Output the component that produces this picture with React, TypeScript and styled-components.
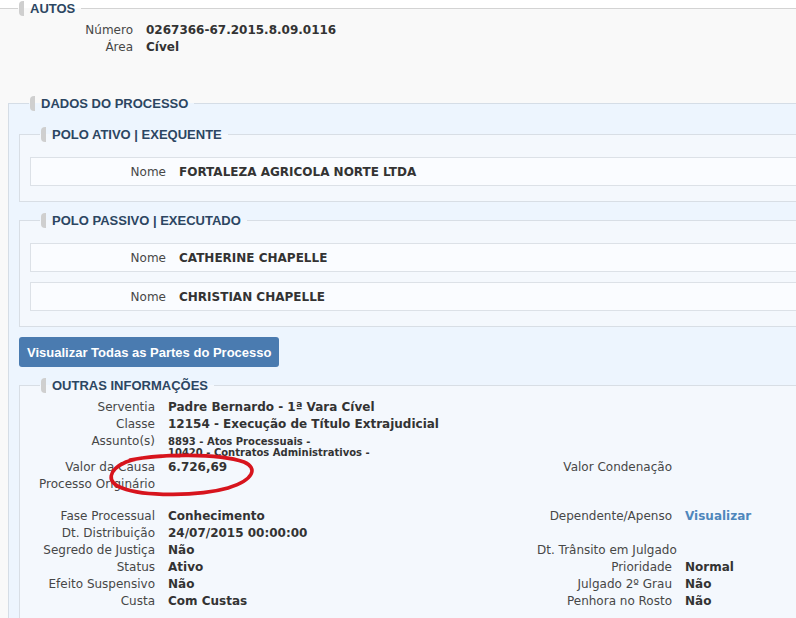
import React from 'react';
import styled, { createGlobalStyle } from 'styled-components';

const Global = createGlobalStyle`
  html, body { margin: 0; padding: 0; background: #ffffff; overflow: hidden; }
  body {
    font-family: "DejaVu Sans", Verdana, sans-serif;
    font-size: 12px;
    color: #333333;
  }
`;

const Page = styled.div`
  position: relative;
  width: 796px;
  height: 618px;
  overflow: hidden;
`;

const Fieldset = styled.fieldset<{ $bg: string; $line: string; $width?: number; $shift?: number }>`
  margin: 0;
  margin-left: ${(p) => p.$shift ?? 0}px;
  padding: 0;
  min-width: 0;
  box-sizing: border-box;
  width: ${(p) => (p.$width ? `${p.$width}px` : 'auto')};
  border: 1px solid ${(p) => p.$line};
  background: ${(p) => p.$bg};
`;

const Legend = styled.legend`
  margin-left: 20px;
  padding: 0 6px 0 1px;
  height: 16px;
`;

const LegendInner = styled.span`
  display: flex;
  align-items: center;
  height: 16px;
  font-family: "Liberation Sans", Arial, sans-serif;
  font-weight: bold;
  font-size: 13px;
  color: #2c4662;
  white-space: nowrap;
`;

const LegendMark = styled.span`
  display: block;
  width: 5px;
  height: 15px;
  margin-right: 6px;
  background: #cfcfcf;
  border-radius: 4px 0 0 4px;
`;

const Body = styled.div<{ $pad: string }>`
  padding: ${(p) => p.$pad};
`;

const Stack = styled.div<{ $gap: number; $top?: number }>`
  display: flex;
  flex-direction: column;
  gap: ${(p) => p.$gap}px;
  margin-top: ${(p) => p.$top ?? 0}px;
`;

const KVGrid = styled.div<{ $labelWidth: number }>`
  display: grid;
  grid-template-columns: ${(p) => p.$labelWidth}px 1fr;
  line-height: 17px;
`;

const InfoGrid = styled.div`
  display: grid;
  grid-template-columns: 135px 382px 135px 1fr;
  line-height: 17px;
`;

const Label = styled.div`
  text-align: right;
  color: #474747;
  white-space: nowrap;
`;

const Value = styled.div`
  padding-left: 13px;
  font-weight: bold;
  color: #333333;
  white-space: nowrap;
`;

const SmallValue = styled.div`
  padding: 3px 0 1px 13px;
  font-size: 10px;
  line-height: 11px;
  font-weight: bold;
  color: #333333;
  white-space: nowrap;
`;

const LinkValue = styled.a`
  padding-left: 13px;
  font-weight: bold;
  color: #4f87bc;
  text-decoration: none;
`;

const PartyRow = styled.div`
  display: grid;
  grid-template-columns: 135px 1fr;
  padding: 6px 0 4px 0;
  line-height: 17px;
  background: #fafcff;
  border: 1px solid #dce1e7;
`;

const Button = styled.button`
  align-self: flex-start;
  margin: 10px 0;
  height: 30px;
  padding: 0 8px;
  border: none;
  border-radius: 3px;
  background: #4a7bb0;
  color: #ffffff;
  font-family: "Liberation Sans", Arial, sans-serif;
  font-weight: bold;
  font-size: 13px;
  cursor: pointer;
`;

const Spacer = styled.div<{ $h: number }>`
  grid-column: 1 / -1;
  height: ${(p) => p.$h}px;
`;

const Annotation = styled.svg`
  position: absolute;
  left: 100px;
  top: 448px;
  pointer-events: none;
`;

type SectionProps = {
  title: string;
  bg: string;
  line: string;
  pad: string;
  width?: number;
  shift?: number;
  children: React.ReactNode;
};

const Section = ({ title, bg, line, pad, width, shift, children }: SectionProps) => (
  <Fieldset $bg={bg} $line={line} $width={width} $shift={shift}>
    <Legend>
      <LegendInner>
        <LegendMark />
        {title}
      </LegendInner>
    </Legend>
    <Body $pad={pad}>{children}</Body>
  </Fieldset>
);

const Party = ({ name }: { name: string }) => (
  <PartyRow>
    <Label>Nome</Label>
    <Value>{name}</Value>
  </PartyRow>
);

type Cell = { label?: string; value?: React.ReactNode };

const Pair = ({ label, value }: Cell) => (
  <>
    <Label>{label ?? ''}</Label>
    {typeof value === 'string' || value === undefined ? <Value>{value ?? ''}</Value> : value}
  </>
);

const upper: [Cell, Cell][] = [
  [{ label: 'Serventia', value: 'Padre Bernardo - 1ª Vara Cível' }, {}],
  [{ label: 'Classe', value: '12154 - Execução de Título Extrajudicial' }, {}],
  [
    {
      label: 'Assunto(s)',
      value: (
        <SmallValue>
          8893 - Atos Processuais -<br />
          10420 - Contratos Administrativos -
        </SmallValue>
      ),
    },
    {},
  ],
  [{ label: 'Valor da Causa', value: '6.726,69' }, { label: 'Valor Condenação' }],
  [{ label: 'Processo Originário' }, {}],
];

const lower: [Cell, Cell][] = [
  [
    { label: 'Fase Processual', value: 'Conhecimento' },
    { label: 'Dependente/Apenso', value: <LinkValue href="#">Visualizar</LinkValue> },
  ],
  [{ label: 'Dt. Distribuição', value: '24/07/2015 00:00:00' }, {}],
  [{ label: 'Segredo de Justiça', value: 'Não' }, { label: 'Dt. Trânsito em Julgado' }],
  [{ label: 'Status', value: 'Ativo' }, { label: 'Prioridade', value: 'Normal' }],
  [{ label: 'Efeito Suspensivo', value: 'Não' }, { label: 'Julgado 2º Grau', value: 'Não' }],
  [{ label: 'Custa', value: 'Com Custas' }, { label: 'Penhora no Rosto', value: 'Não' }],
];

const renderRows = (rows: [Cell, Cell][], key: string) =>
  rows.map(([a, b], i) => (
    <React.Fragment key={`${key}${i}`}>
      <Pair {...a} />
      <Pair {...b} />
    </React.Fragment>
  ));

export default function App() {
  return (
    <Page>
      <Global />
      <Section title="AUTOS" bg="#f9f9f9" line="#d3d3d3" pad="6px 10px 0 10px" width={1090} shift={-3}>
        <KVGrid $labelWidth={125}>
          <Label>Número</Label>
          <Value>0267366-67.2015.8.09.0116</Value>
          <Label>Área</Label>
          <Value>Cível</Value>
        </KVGrid>
        <Stack $gap={0} $top={39}>
          <Section title="DADOS DO PROCESSO" bg="#edf5fe" line="#d5dde6" pad="15px 10px 0 10px">
            <Stack $gap={10}>
              <Section title="POLO ATIVO | EXEQUENTE" bg="#f4f8fd" line="#d8dee5" pad="15px 10px 15px 10px">
                <Party name="FORTALEZA AGRICOLA NORTE LTDA" />
              </Section>
              <Section title="POLO PASSIVO | EXECUTADO" bg="#f4f8fd" line="#d8dee5" pad="15px 10px 15px 10px">
                <Stack $gap={10}>
                  <Party name="CATHERINE CHAPELLE" />
                  <Party name="CHRISTIAN CHAPELLE" />
                </Stack>
              </Section>
            </Stack>
            <Stack $gap={0}>
              <Button type="button">Visualizar Todas as Partes do Processo</Button>
            </Stack>
            <Section title="OUTRAS INFORMAÇÕES" bg="#f4f8fd" line="#d8dee5" pad="6px 0 40px 0">
              <InfoGrid>
                {renderRows(upper, 'u')}
                <Spacer $h={15} />
                {renderRows(lower, 'l')}
              </InfoGrid>
            </Section>
          </Section>
        </Stack>
      </Section>
      <Annotation width="170" height="60" viewBox="0 0 170 60">
        <path
          d="M 30 12 C 60 6, 118 5, 144 14 C 158 20, 154 32, 128 40 C 100 48, 45 49, 22 40 C 6 34, 8 22, 26 14 C 40 9, 62 7, 80 8"
          fill="none"
          stroke="#d7141d"
          strokeWidth="3.6"
          strokeLinecap="round"
        />
      </Annotation>
    </Page>
  );
}
